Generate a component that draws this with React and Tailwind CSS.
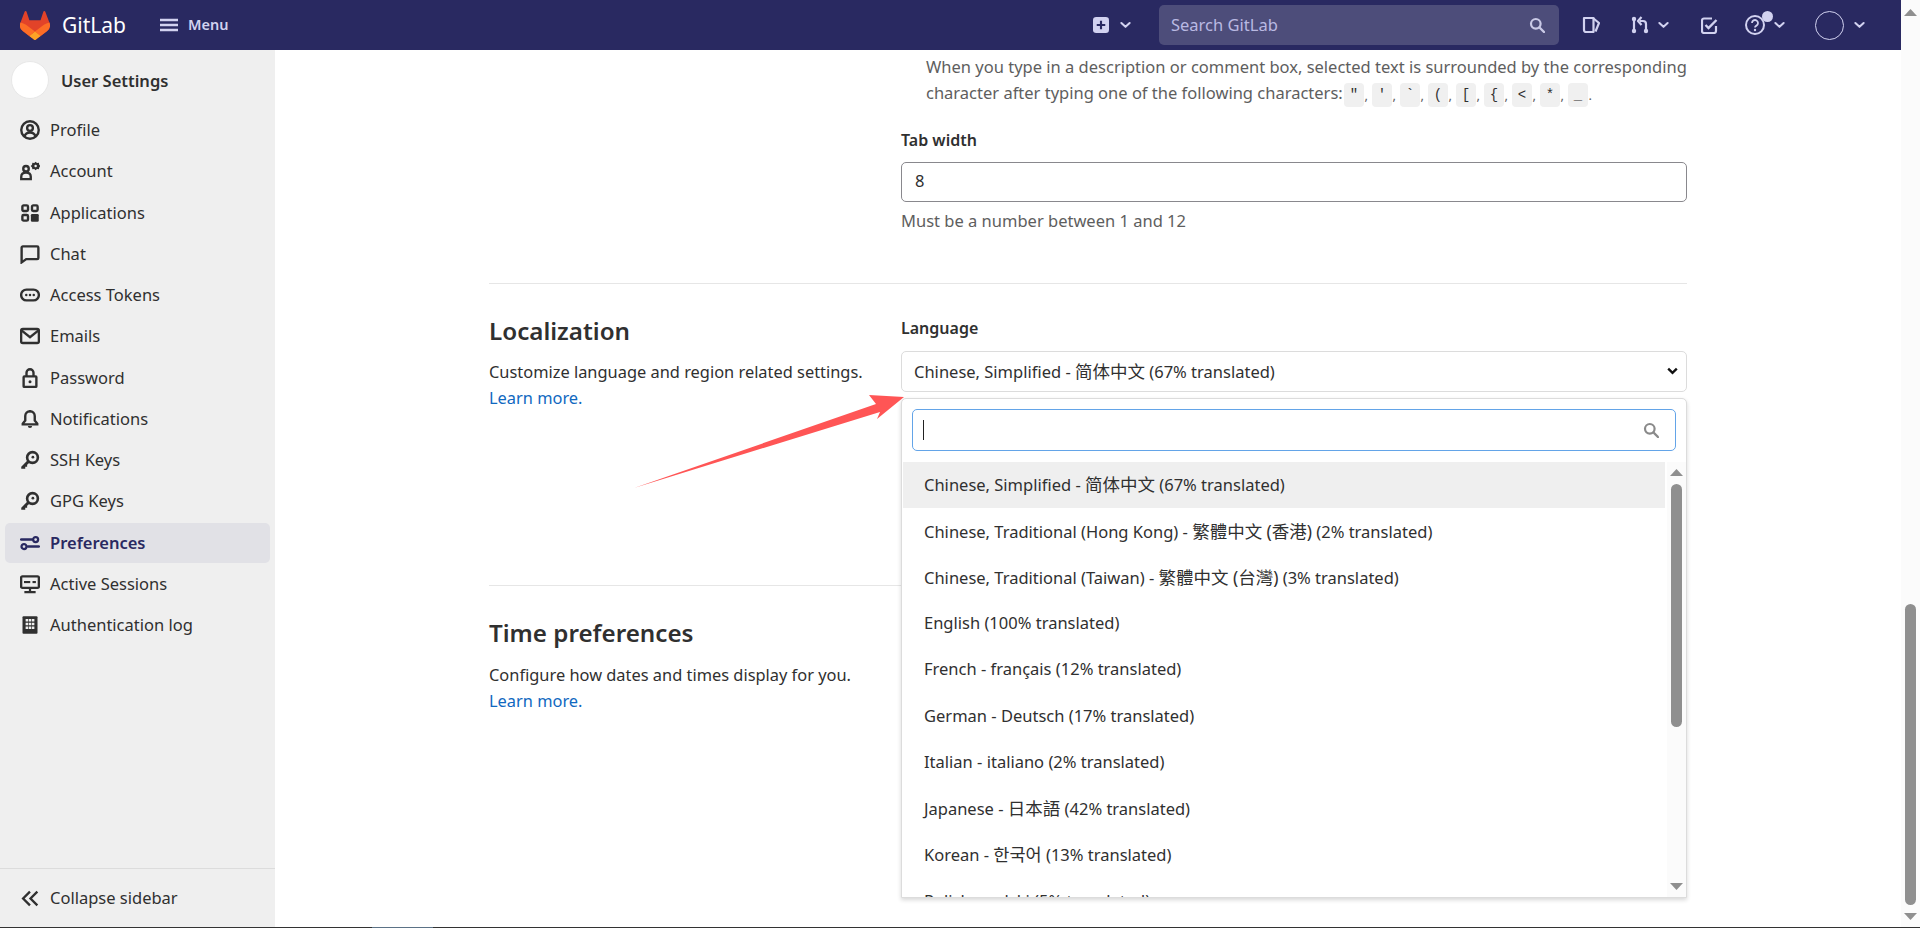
import React from "react";

const Ic = ({ children, className = "" }) => (
  <svg viewBox="0 0 16 16" fill="none" className={"w-5 h-5 shrink-0 " + className}>{children}</svg>
);
const S = { stroke: "currentColor", strokeWidth: 1.9, fill: "none" };
const icons = {
  profile: (<><circle cx="8" cy="8" r="7" {...S} /><circle cx="8" cy="6.400" r="2.300" {...S} /><path d="M3.500 13.200c.8-2.200 2.500-3.200 4.500-3.200s3.700 1 4.500 3.200" {...S} /></>),
  account: (<><circle cx="4.800" cy="6.200" r="2.200" {...S} /><path d="M1 14.500v-2c0-2 1.600-3.200 3.800-3.200s3.800 1.200 3.800 3.200v2z" {...S} /><path d="M12.500 0.600l1.100 1 1.500-.2.300 1.500 1 1.100-1 1.100-.3 1.500-1.500-.2-1.100 1-1.100-1-1.500.2-.3-1.500-1-1.100 1-1.100.3-1.500 1.500.2z" fill="currentColor" /><circle cx="12.500" cy="4" r="1" fill="#efefef" /></>),
  apps: (<><rect x="1.900" y="1.900" width="4.500" height="4.500" rx="1" {...S} /><rect x="9.600" y="1.900" width="4.500" height="4.500" rx="1" {...S} /><rect x="1.900" y="9.600" width="4.500" height="4.500" rx="1" {...S} /><rect x="8.700" y="8.700" width="6.300" height="6.300" rx="1" fill="currentColor" /></>),
  chat: (<path d="M2.300 1.900h11.400a1 1 0 0 1 1 1v8.200a1 1 0 0 1-1 1H5L1.300 14.700V2.900a1 1 0 0 1 1-1z" {...S} />),
  token: (<><rect x="0.900" y="3.700" width="14.200" height="8.600" rx="4.300" {...S} /><circle cx="5" cy="8" r="1" fill="currentColor" /><circle cx="8" cy="8" r="1" fill="currentColor" /><circle cx="11" cy="8" r="1" fill="currentColor" /></>),
  email: (<><rect x="0.900" y="2.400" width="14.200" height="11.200" rx="1.300" {...S} /><path d="M1.200 3.500L8 9l6.800-5.500" {...S} /></>),
  lock: (<><rect x="2.900" y="6.700" width="10.200" height="8.400" rx=".6" {...S} /><path d="M5.200 6.700V3.800a2.800 2.800 0 0 1 5.600 0v2.900" {...S} /><circle cx="8" cy="11" r="1.200" fill="currentColor" /></>),
  bell: (<><path d="M8 1.800a3.800 3.800 0 0 1 3.800 3.800v3.600l2 2.500v.6H2.200v-.6l2-2.500V5.600A3.800 3.800 0 0 1 8 1.800z" {...S} /><path d="M6.300 13.500a1.700 1.700 0 0 0 3.400 0z M7.200 1h1.600v1.500H7.200z" fill="currentColor" /></>),
  key: (<><circle cx="10" cy="6" r="4.300" stroke="currentColor" strokeWidth="2.100" /><circle cx="10.300" cy="5.700" r="1.100" fill="currentColor" /><path d="M6.500 7.800L1 13.300V15h3.200v-1.600h1.500v-1.700L8.200 9.500z" fill="currentColor" /></>),
  prefs: (<><path d="M1 5.200h8.500M6.500 10.800H15" stroke="currentColor" strokeWidth="2.100" strokeLinecap="round" /><circle cx="12.500" cy="5.200" r="2" stroke="currentColor" strokeWidth="1.800" /><circle cx="3.200" cy="10.800" r="2" stroke="currentColor" strokeWidth="1.800" /></>),
  monitor: (<><rect x="0.900" y="1.900" width="14.200" height="9.200" rx="1" {...S} /><rect x="3.200" y="5.600" width="5" height="1.700" fill="currentColor" /><rect x="10" y="5.600" width="2.700" height="1.700" fill="currentColor" /><path d="M8 11.500V14M3.500 14.400h9" stroke="currentColor" strokeWidth="1.800" /></>),
  log: (<><rect x="2" y="1" width="12" height="14" rx=".8" fill="currentColor" /><g fill="#efefef"><rect x="4.500" y="3.200" width="2" height="2" /><rect x="7" y="3.200" width="2" height="2" /><rect x="9.500" y="3.200" width="2" height="2" /><rect x="4.500" y="6.200" width="2" height="2" /><rect x="7" y="6.200" width="2" height="2" /><rect x="9.500" y="6.200" width="2" height="2" /><rect x="4.500" y="9.200" width="2" height="2" /><rect x="7" y="9.200" width="2" height="2" /><rect x="9.500" y="9.200" width="2" height="2" /></g></>),
};

const nav = [
  ["Profile", "profile"], ["Account", "account"], ["Applications", "apps"], ["Chat", "chat"],
  ["Access Tokens", "token"], ["Emails", "email"], ["Password", "lock"], ["Notifications", "bell"],
  ["SSH Keys", "key"], ["GPG Keys", "key"], ["Preferences", "prefs"], ["Active Sessions", "monitor"],
  ["Authentication log", "log"],
];

const C = ({ children }) => <span className="text-[17.500px]">{children}</span>;

const langs = [
  <>Chinese, Simplified - <C>简体中文</C> (67% translated)</>,
  <>Chinese, Traditional (Hong Kong) - <C>繁體中文</C> <C>(香港)</C> (2% translated)</>,
  <>Chinese, Traditional (Taiwan) - <C>繁體中文</C> <C>(台灣)</C> (3% translated)</>,
  <>English (100% translated)</>,
  <>French - français (12% translated)</>,
  <>German - Deutsch (17% translated)</>,
  <>Italian - italiano (2% translated)</>,
  <>Japanese - <C>日本語</C> (42% translated)</>,
  <>Korean - <C>한국어</C> (13% translated)</>,
  <>Polish - polski (5% translated)</>,
];

const Chev = ({ className = "" }) => (
  <svg viewBox="0 0 12 8" className={"w-[11px] h-[8px] shrink-0 " + className} fill="none">
    <path d="M1.500 1.800L6 6l4.500-4.200" stroke="currentColor" strokeWidth="2.200" strokeLinecap="round" strokeLinejoin="round" />
  </svg>
);
const Tri = ({ down, className = "" }) => (
  <svg viewBox="0 0 13 7" className={"w-[13px] h-[7px] shrink-0 " + className}>
    <path d={down ? "M0 0h13L6.500 7z" : "M6.500 0L13 7H0z"} fill="#8f8f8f" />
  </svg>
);
const Mag = ({ className = "" }) => (
  <svg viewBox="0 0 16 16" className={className} fill="none">
    <circle cx="6.800" cy="6.800" r="4.800" stroke="currentColor" strokeWidth="2.200" />
    <path d="M10.500 10.500L15 15" stroke="currentColor" strokeWidth="2.400" strokeLinecap="round" />
  </svg>
);

const Header = () => (
  <header className="h-[50px] shrink-0 bg-[#292961] flex items-center text-[#d2d2f0]">
    <svg viewBox="0 0 25 24" className="w-[30px] h-[29px] ml-5 shrink-0">
      <path d="m24.507 9.5-.034-.09L21.082.562a.896.896 0 0 0-1.694.091l-2.29 7.01H7.825L5.535.653a.898.898 0 0 0-1.694-.09L.451 9.411.416 9.5a6.297 6.297 0 0 0 2.09 7.278l.012.01.03.022 5.16 3.867 2.56 1.935 1.554 1.176a1.051 1.051 0 0 0 1.268 0l1.555-1.176 2.56-1.935 5.197-3.89.014-.01A6.297 6.297 0 0 0 24.507 9.5Z" fill="#E24329" />
      <path d="m24.507 9.5-.034-.09a11.44 11.44 0 0 0-4.56 2.051l-7.447 5.632 4.742 3.584 5.197-3.89.014-.01A6.297 6.297 0 0 0 24.507 9.5Z" fill="#FC6D26" />
      <path d="m7.707 20.677 2.56 1.935 1.555 1.176a1.051 1.051 0 0 0 1.268 0l1.555-1.176 2.56-1.935-4.743-3.584-4.755 3.584Z" fill="#FCA326" />
      <path d="M5.010 11.461a11.430 11.430 0 0 0-4.560-2.050L.416 9.500a6.297 6.297 0 0 0 2.090 7.278l.012.010.030.022 5.160 3.867 4.745-3.584-7.444-5.632Z" fill="#FC6D26" />
    </svg>
    <span className="ml-3 w-[64px] text-white text-[21px] leading-none">GitLab</span>
    <svg viewBox="0 0 18 14" className="ml-[34px] w-[18px] h-[14px] shrink-0">
      <path d="M0 2h18M0 7h18M0 12h18" stroke="currentColor" strokeWidth="2.400" />
    </svg>
    <span className="ml-[10px] text-[14.500px] font-semibold">Menu</span>

    <svg viewBox="0 0 15 15" className="ml-auto w-4 h-4 shrink-0">
      <rect width="15" height="15" rx="3" fill="currentColor" />
      <path d="M7.500 3.500v8M3.500 7.500h8" stroke="#292961" strokeWidth="2" />
    </svg>
    <Chev className="ml-[11px]" />
    <div className="ml-7 w-[400px] h-10 rounded-[5px] bg-[#4d4d7a] flex items-center pl-[12px] pr-[14px] text-[#b9b9e2] text-[16.500px]">
      <span>Search GitLab</span>
      <Mag className="ml-auto w-4 h-4 text-[#c9c9e6]" />
    </div>
    <svg viewBox="0 0 18 18" className="ml-[23px] w-[18px] h-[18px] shrink-0" fill="none">
      <path d="M2 2h9.500v14H4a2 2 0 0 1-2-2z" stroke="currentColor" strokeWidth="2.200" strokeLinejoin="round" />
      <path d="M11.500 2.500L17 7l-3.500 8.500" stroke="currentColor" strokeWidth="2.200" strokeLinejoin="round" />
    </svg>
    <svg viewBox="0 0 18 18" className="ml-[31px] w-[18px] h-[18px] shrink-0" fill="none">
      <circle cx="3" cy="3" r="2.200" fill="currentColor" /><circle cx="3" cy="15" r="2.200" fill="currentColor" /><circle cx="15" cy="15" r="2.200" fill="currentColor" />
      <path d="M3 3v12M15 15V8a3 3 0 0 0-3-3H9" stroke="currentColor" strokeWidth="2.200" />
      <path d="M10.500 1L7 5l3.500 4" stroke="currentColor" strokeWidth="2.200" strokeLinejoin="round" />
    </svg>
    <Chev className="ml-[9px]" />
    <svg viewBox="0 0 17 17" className="ml-[32px] w-[17px] h-[17px] shrink-0" fill="none">
      <path d="M15 9v5a2 2 0 0 1-2 2H3a2 2 0 0 1-2-2V3.500a2 2 0 0 1 2-2h8" stroke="currentColor" strokeWidth="2.200" />
      <path d="M4.500 8l3 3 8-8" stroke="currentColor" strokeWidth="2.400" />
    </svg>
    <div className="relative ml-[27px] w-5 h-5 shrink-0 flex items-center justify-center">
      <svg viewBox="0 0 20 20" className="w-5 h-5" fill="none">
        <circle cx="10" cy="10" r="9" stroke="currentColor" strokeWidth="2" />
        <path d="M7 8a3 3 0 1 1 4.500 2.600c-1 .6-1.500 1-1.500 2" stroke="currentColor" strokeWidth="1.800" />
        <circle cx="10" cy="15" r="1.200" fill="currentColor" />
      </svg>
      <span className="absolute left-[17px] -top-[4px] w-[11px] h-[11px] rounded-full bg-[#d2d2f0]" />
    </div>
    <Chev className="ml-[9px]" />
    <div className="ml-[30px] w-[29px] h-[29px] rounded-full border border-[#d2d2f0] shrink-0" />
    <Chev className="ml-[10px] mr-[36px]" />
  </header>
);

const Sidebar = () => (
  <aside className="w-[275px] shrink-0 bg-[#efefef] flex flex-col text-[#303030]">
    <div className="flex items-center pt-[11px] pl-[11px] mb-[11px]">
      <div className="w-[38px] h-[38px] rounded-full bg-white border border-[#e8e8e8]" />
      <span className="ml-3 pt-[2px] font-semibold text-[16.500px]">User Settings</span>
    </div>
    <nav className="flex flex-col gap-[1.250px] px-[5px]">
      {nav.map(([label, icon]) => {
        const active = label === "Preferences";
        return (
          <div key={label} className={"h-10 flex items-center gap-[10px] pl-[15px] rounded-[5px] text-[16.500px] " + (active ? "bg-[#e1e1e6] text-[#292961] font-semibold" : "")}>
            <Ic>{icons[icon]}</Ic>
            <span className="pt-px">{label}</span>
          </div>
        );
      })}
    </nav>
    <div className="mt-auto h-[59px] border-t border-[#dcdcdc] flex items-center pl-[21px] text-[16.500px]">
      <svg viewBox="0 0 18 16" className="w-[19px] h-[17px] shrink-0" fill="none">
        <path d="M8.500 1.500L2 8l6.500 6.500M15.500 1.500L9 8l6.500 6.500" stroke="currentColor" strokeWidth="2.200" />
      </svg>
      <span className="ml-[10px]">Collapse sidebar</span>
    </div>
  </aside>
);

const Kbd = ({ children }) => (
  <code className="inline-flex items-center justify-center w-5 h-6 rounded-[4px] bg-[#f0f0f0] text-[#303030] text-[14px] font-['Liberation_Mono',monospace]">{children}</code>
);

const Dropdown = () => (
  <div className="absolute top-full left-0 right-0 mt-[6px] h-[500px] bg-white border border-[#dcdcdc] rounded-t-[5px] shadow-[0_2px_4px_rgba(0,0,0,0.16)] flex flex-col overflow-hidden z-10">
    <div className="px-[10px] pt-[10px] pb-[11px] shrink-0">
      <div className="h-[42px] rounded-[5px] border border-[#63a4e8] flex items-center pl-[10px] pr-[16px]">
        <span className="w-px h-5 bg-[#222]" />
        <Mag className="ml-auto w-4 h-4 text-[#8a8a8a]" />
      </div>
    </div>
    <div className="flex flex-1 min-h-0">
      <ul className="flex-1 min-w-0 overflow-hidden pl-px">
        {langs.map((l, i) => (
          <li key={i} className={"h-[46.250px] flex items-center pl-[21px] text-[16.500px] whitespace-pre " + (i === 0 ? "bg-[#efefef]" : "")}><span>{l}</span></li>
        ))}
      </ul>
      <div className="w-[19px] ml-[2px] shrink-0 bg-[#fbfbfb] flex flex-col items-center pt-[7px]">
        <Tri />
        <div className="mt-2 w-[11px] h-[243px] rounded-full bg-[#8f8f8f]" />
        <Tri down className="mt-auto mb-[7px]" />
      </div>
    </div>
  </div>
);

const Help = ({ children, className = "" }) => <p className={"text-[#5e5e5e] text-[16.500px] " + className}>{children}</p>;
const Link = () => <a className="block text-[#1068bf] leading-[26px]">Learn more.</a>;

const Main = () => (
  <main className="flex-1 min-w-0 bg-white text-[#303030]">
    <div className="w-[1198px] mx-auto">
      <div className="grid grid-cols-[412px_786px]">
        <div />
        <div className="pt-1">
          <p className="pl-[25px] text-[#5e5e5e] text-[16.500px] leading-[26px] whitespace-nowrap">
            When you type in a description or comment box, selected text is surrounded by the corresponding
            <br />
            character after typing one of the following characters:{" "}
            <span className="inline-flex items-center gap-[0.500px] align-middle -ml-[3px]">
              {['"', "'", "`", "(", "[", "{", "<", "*", "_"].map((c, i) => (
                <React.Fragment key={c}>
                  <Kbd>{c}</Kbd>
                  <span className="w-[7px] text-[13px]">{i < 8 ? "," : "."}</span>
                </React.Fragment>
              ))}
            </span>
          </p>
          <label className="block mt-5 font-semibold text-[16px] leading-6">Tab width</label>
          <div className="mt-[10px] h-10 rounded-[5px] border border-[#89888d] flex items-center pl-[13px] text-[16.500px]">8</div>
          <Help className="mt-[7px] leading-6">Must be a number between 1 and 12</Help>
        </div>
      </div>
      <hr className="mt-[50px] border-t border-[#e6e6e6]" />
      <section className="grid grid-cols-[412px_786px] h-[301px]">
        <div className="pt-[31px]">
          <h2 className="text-[24.200px] leading-8 font-semibold">Localization</h2>
          <div className="mt-3 text-[16.400px] leading-[26px] text-[#303030]">
            Customize language and region related settings.
            <Link />
          </div>
        </div>
        <div className="pt-8">
          <label className="block font-semibold text-[16px] leading-6">Language</label>
          <div className="relative mt-[11px]">
            <div className="h-[41px] rounded-[5px] border border-[#dcdcdc] flex items-center pl-3 pr-[8px] text-[16.500px] whitespace-pre">
              <span>{langs[0]}</span>
              <svg viewBox="0 0 12 8" className="ml-auto w-[11px] h-[8px] text-[#111]" fill="none">
                <path d="M1.300 1.500L6 6l4.700-4.500" stroke="currentColor" strokeWidth="2.600" />
              </svg>
            </div>
            <Dropdown />
          </div>
        </div>
      </section>
      <hr className="border-t border-[#e6e6e6]" />
      <section className="pt-[31px] w-[412px]">
        <h2 className="text-[24.200px] leading-8 font-semibold">Time preferences</h2>
        <div className="mt-[13px] text-[16.400px] leading-[26px]">
          Configure how dates and times display for you.
          <Link />
        </div>
      </section>
    </div>
  </main>
);

export default function App() {
  return (
    <div className="w-[1920px] h-[928px] overflow-hidden flex flex-col relative font-['Noto_Sans','Noto_Sans_CJK_SC',sans-serif]">
      <div className="flex flex-1 min-h-0">
        <div className="flex-1 min-w-0 flex flex-col">
          <Header />
          <div className="flex flex-1 min-h-0">
            <Sidebar />
            <Main />
          </div>
        </div>
        <div className="w-[19px] shrink-0 bg-[#fbfbfb] flex flex-col items-center pt-[9px]">
          <Tri />
          <div className="mt-[588px] w-[11px] h-[301px] rounded-full bg-[#8f8f8f]" />
          <Tri down className="mt-2" />
        </div>
      </div>
      <div className="h-px shrink-0 flex bg-[#333]">
        <div className="ml-[372px] w-[61px] bg-[#5b7286]" />
      </div>
      <svg className="absolute left-[630px] top-[390px] w-[280px] h-[100px] z-20 pointer-events-none" viewBox="630 390 280 100">
        <polygon points="634,488 876,404 869,395 904,397 877,419 880,412" fill="#ff5555" />
      </svg>
    </div>
  );
}
